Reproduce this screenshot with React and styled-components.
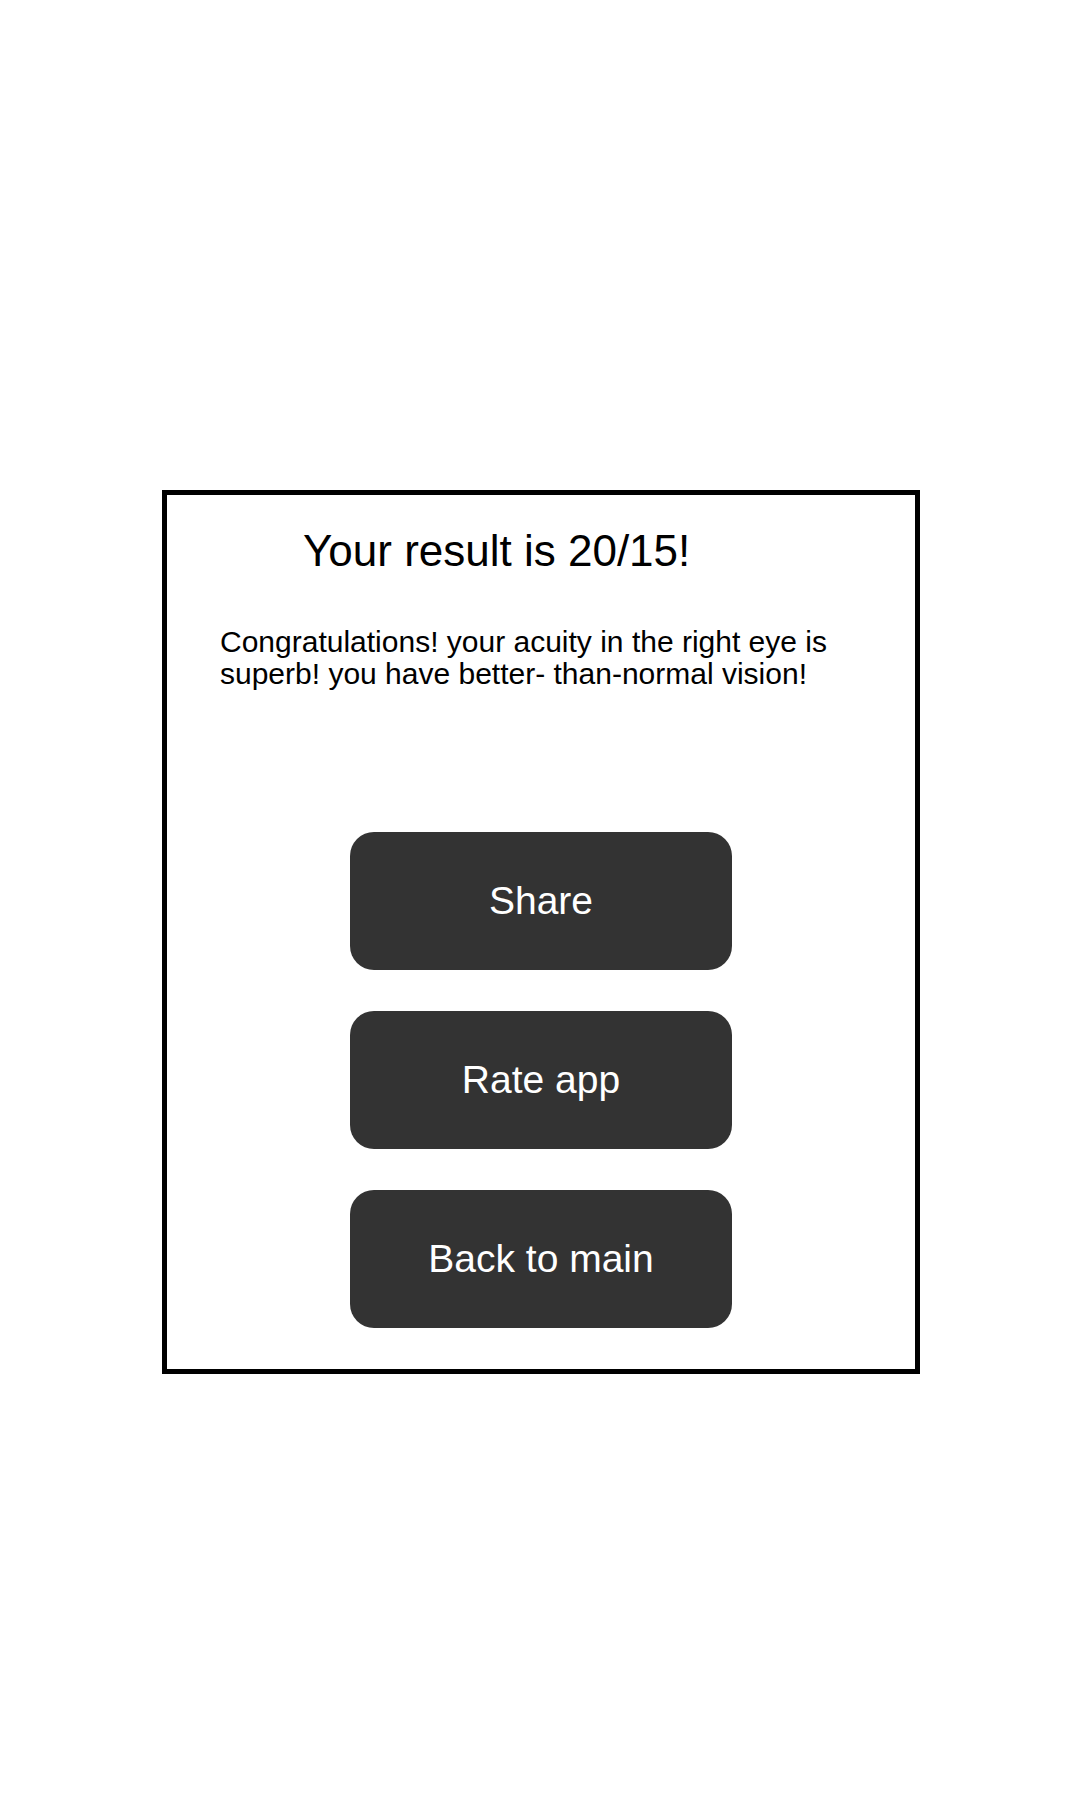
import React from 'react';
import styled, { createGlobalStyle } from 'styled-components';

const GlobalStyle = createGlobalStyle`
  html, body {
    margin: 0;
    padding: 0;
    background: #fff;
  }
  body {
    font-family: "Liberation Sans", Arial, sans-serif;
  }
`;

const Page = styled.div`
  width: 1080px;
  min-height: 1800px;
  padding: 490px 0 0 162px;
  box-sizing: border-box;
`;

const ResultCard = styled.div`
  width: 758px;
  height: 884px;
  box-sizing: border-box;
  border: 5px solid #000;
  display: flex;
  flex-direction: column;
  padding-top: 30px;
`;

const Title = styled.h1`
  margin: 0;
  padding-left: 136px;
  font-size: 44px;
  font-weight: 400;
  line-height: 51px;
  color: #000;
`;

const Message = styled.p`
  margin: 50px 0 0;
  padding: 0 60px 0 53px;
  font-size: 30px;
  line-height: 32px;
  color: #000;
`;

const Actions = styled.div`
  margin-top: 142px;
  display: flex;
  flex-direction: column;
  align-items: center;
  gap: 41px;
`;

const ActionButton = styled.button`
  width: 382px;
  height: 138px;
  border: none;
  border-radius: 24px;
  background: #333333;
  color: #fff;
  font-family: "Liberation Sans", Arial, sans-serif;
  font-size: 39px;
  display: flex;
  align-items: center;
  justify-content: center;
  padding: 0;
  cursor: pointer;
`;

const actions = ['Share', 'Rate app', 'Back to main'];

const App = () => (
  <>
    <GlobalStyle />
    <Page>
      <ResultCard>
        <Title>Your result is 20/15!</Title>
        <Message>
          Congratulations! your acuity in the right eye is superb! you have
          better- than-normal vision!
        </Message>
        <Actions>
          {actions.map(label => (
            <ActionButton key={label}>{label}</ActionButton>
          ))}
        </Actions>
      </ResultCard>
    </Page>
  </>
);

export default App;
